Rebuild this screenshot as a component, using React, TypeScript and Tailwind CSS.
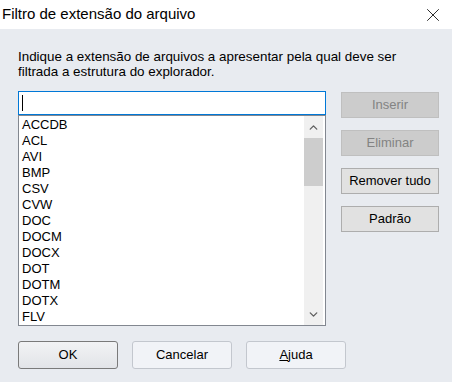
import { X, ChevronUp, ChevronDown } from "lucide-react";

const extensions = [
  "ACCDB",
  "ACL",
  "AVI",
  "BMP",
  "CSV",
  "CVW",
  "DOC",
  "DOCM",
  "DOCX",
  "DOT",
  "DOTM",
  "DOTX",
  "FLV",
];

function SideButton({ label, disabled }: { label: string; disabled?: boolean }) {
  return (
    <button
      className={
        disabled
          ? "w-[98px] h-[26px] border border-[#bfbfbf] bg-[#cccccc] text-[#838383] text-[13px]"
          : "w-[98px] h-[26px] border border-[#adadad] bg-[#e1e1e1] text-black text-[13px]"
      }
    >
      {label}
    </button>
  );
}

export default function App() {
  return (
    <div
      className="w-[452px] h-[382px] flex flex-col bg-[#e8ebf0] overflow-hidden"
      style={{ fontFamily: '"Liberation Sans", Arial, sans-serif' }}
    >
      {/* Title bar */}
      <div className="h-[29px] bg-white flex items-center justify-between pl-[2px] pr-[8px] shrink-0">
        <span className="text-[15px] text-black">Filtro de extensão do arquivo</span>
        <X size={22} strokeWidth={0.9} className="text-black" />
      </div>

      {/* Body */}
      <div className="flex flex-col pl-[18px] pt-[20px]">
        <p className="text-[13.4px] leading-[15px] text-black w-[410px]">
          Indique a extensão de arquivos a apresentar pela qual deve ser
          <br />
          filtrada a estrutura do explorador.
        </p>

        <div className="flex mt-[12px]">
          <div className="flex flex-col w-[308px]">
            <div className="h-[24px] bg-white border border-[#0078d7] flex items-center pl-[3px]">
              <div className="w-[1px] h-[16px] bg-black" />
            </div>
            <div className="h-[211px] bg-white border border-[#828790] flex overflow-hidden">
              <div className="flex-1 flex flex-col pl-[3px] pt-[1px]">
                {extensions.map((e) => (
                  <div key={e} className="h-[16px] leading-[16px] text-[13px] text-black">
                    {e}
                  </div>
                ))}
              </div>
              <div className="w-[19px] mr-[2px] bg-[#f0f0f0] flex flex-col items-center">
                <div className="h-[22px] flex items-center justify-center">
                  <ChevronUp size={13} strokeWidth={2.5} className="text-[#606060]" />
                </div>
                <div className="w-[19px] h-[48px] bg-[#cdcdcd]" />
                <div className="flex-1" />
                <div className="h-[22px] flex items-center justify-center">
                  <ChevronDown size={13} strokeWidth={2.5} className="text-[#606060]" />
                </div>
              </div>
            </div>
          </div>

          <div className="flex flex-col gap-[12px] ml-[15px] mt-[1px]">
            <SideButton label="Inserir" disabled />
            <SideButton label="Eliminar" disabled />
            <SideButton label="Remover tudo" />
            <SideButton label="Padrão" />
          </div>
        </div>

        <div className="flex gap-[14px] mt-[15px]">
          <button className="w-[100px] h-[28px] rounded-[3px] border border-[#7a7a7a] bg-gradient-to-b from-[#f2f3f5] to-[#e2e4e8] text-[13px] text-black">
            OK
          </button>
          <button className="w-[100px] h-[28px] rounded-[3px] border border-[#c3c7ce] bg-[#f1f3f7] text-[13px] text-black">
            Cancelar
          </button>
          <button className="w-[100px] h-[28px] rounded-[3px] border border-[#c3c7ce] bg-[#f1f3f7] text-[13px] text-black">
            <span className="underline">A</span>juda
          </button>
        </div>
      </div>
    </div>
  );
}
